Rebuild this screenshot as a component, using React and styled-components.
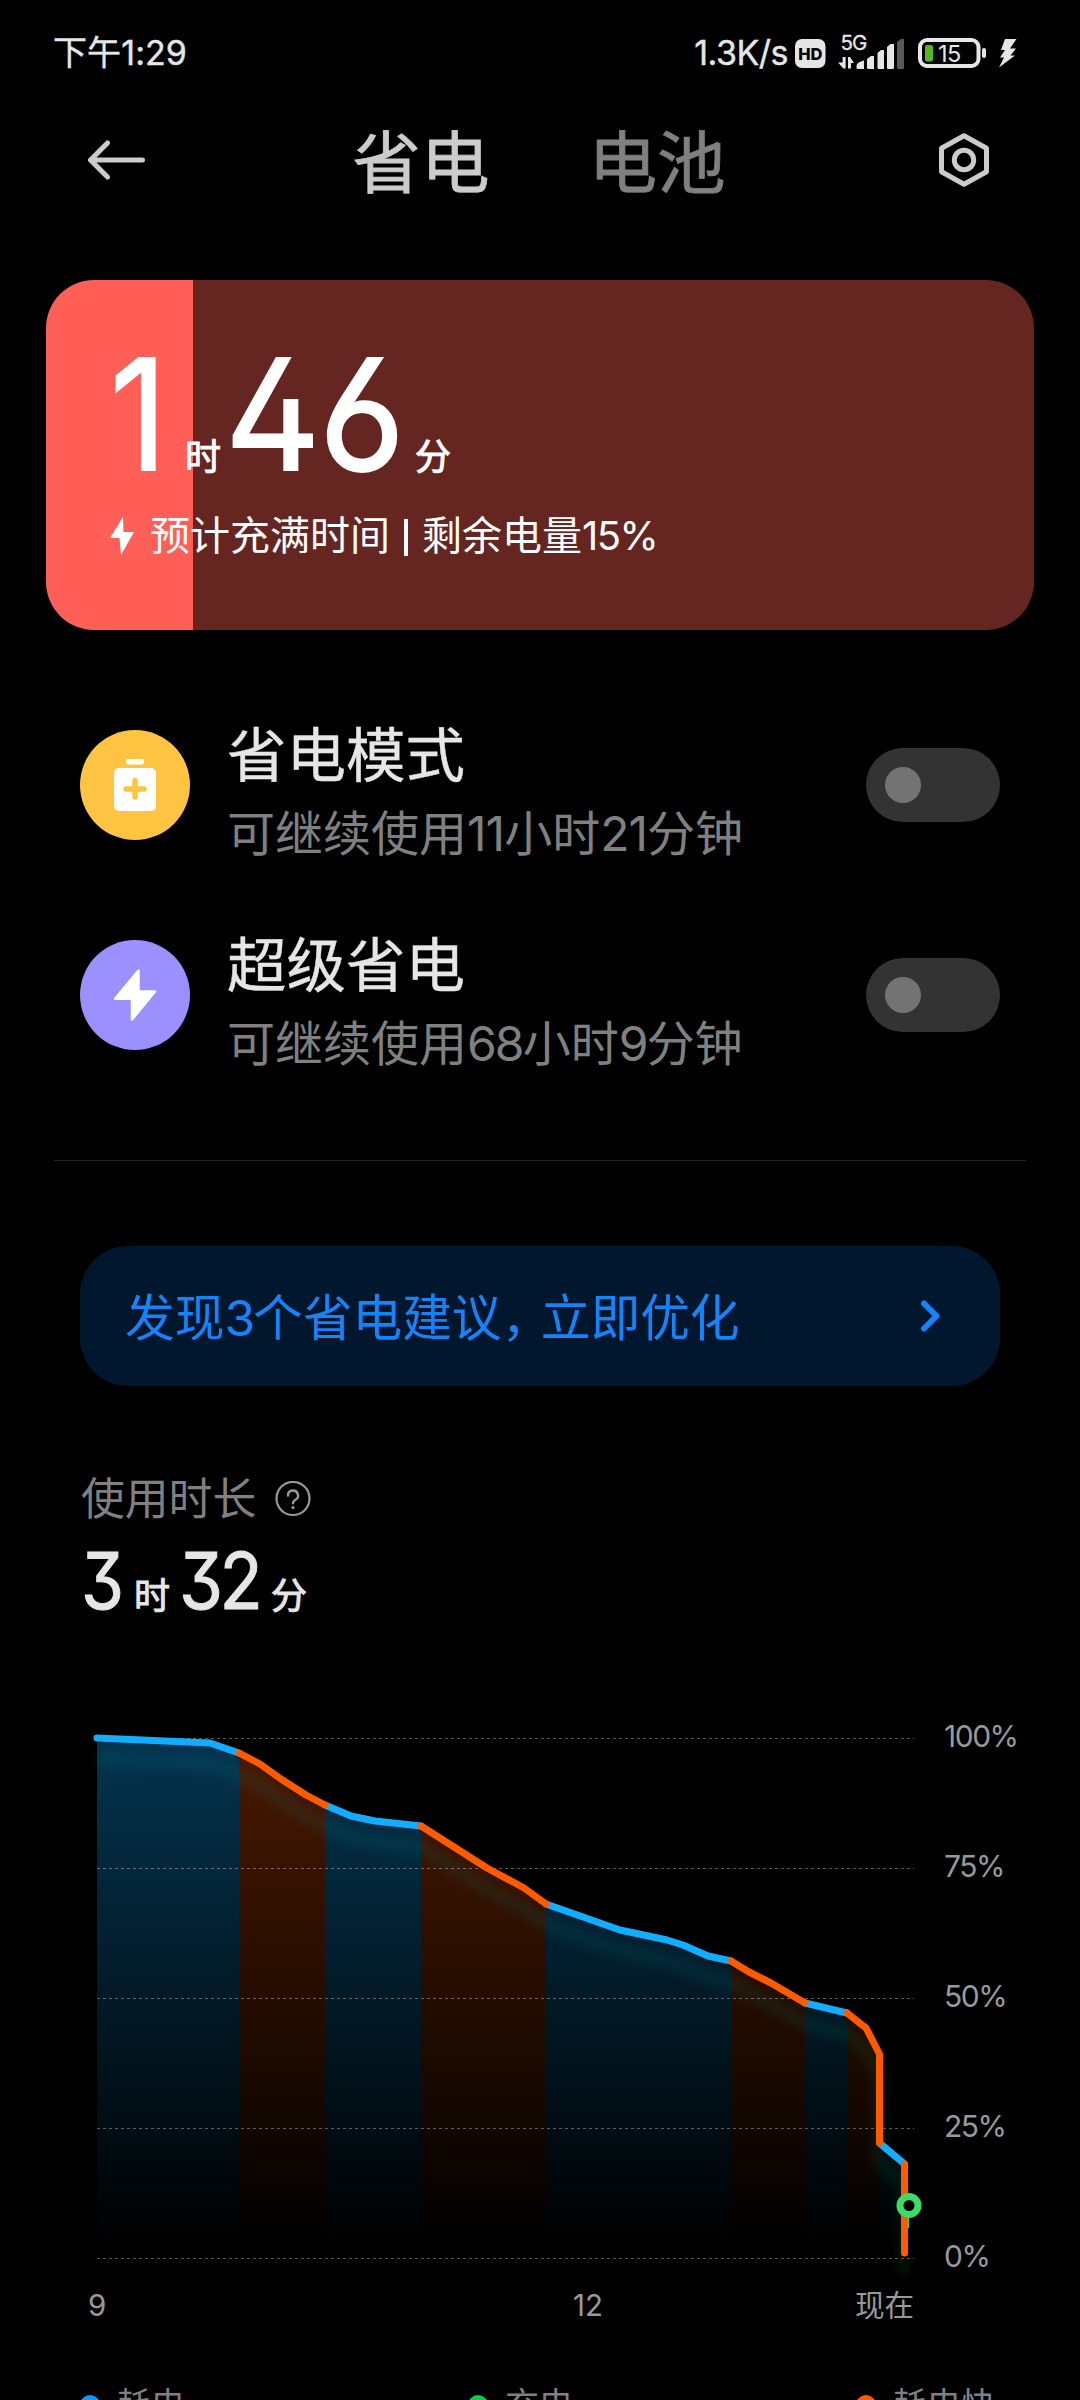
import React from "react";
import styled, { createGlobalStyle } from "styled-components";

const GlobalStyle = createGlobalStyle`
  * { box-sizing: border-box; }
  html, body { margin: 0; padding: 0; background: #000; }
  body { font-family: Inter, "Noto Sans CJK SC", sans-serif; }
`;

const Screen = styled.main`
  width: 1080px;
  height: 2400px;
  overflow: hidden;
  background: #000;
  color: #e6e6e6;
  display: flex;
  flex-direction: column;
`;

const StatusBar = styled.header`
  height: 105px;
  flex: none;
  padding: 0 62px 0 53px;
  display: flex;
  align-items: center;
  justify-content: space-between;
  font-size: 34px;
  line-height: 40px;
`;

const StatusText = styled.span`
  letter-spacing: ${(p) => p.$tracking || "0"};
  -webkit-text-stroke: 0.4px currentColor;
  white-space: nowrap;
`;

const StatusGroup = styled.div`
  display: flex;
  align-items: center;
`;

const StatusSvg = styled.svg`
  display: block;
  margin-left: 6px;
`;

const TitleBar = styled.nav`
  height: 115px;
  flex: none;
  padding: 0 88px;
  display: flex;
  align-items: center;
  justify-content: space-between;
`;

const NavIcon = styled.svg`
  display: block;
  margin-bottom: 5px;
`;

const Tabs = styled.div`
  display: flex;
  gap: 99px;
  margin: 2px 3px 0 0;
`;

const Tab = styled.span`
  font-size: 68.6px;
  line-height: 80px;
  color: ${(p) => (p.$active ? "#cccccc" : "#808080")};
  -webkit-text-stroke: 0.8px currentColor;
`;

const BatteryCard = styled.section`
  width: 988px;
  height: 350px;
  flex: none;
  margin: 60px 0 0 46px;
  padding: 59px 0 0 64px;
  border-radius: 48px;
  background: linear-gradient(to right, #ff5f57 ${(p) => p.$level}px, #652622 ${(p) => p.$level}px);
  color: #fff;
`;

const Duration = styled.div`
  display: flex;
  align-items: baseline;
  height: ${(p) => p.$height}px;
  line-height: ${(p) => p.$height}px;
`;

const BigNumber = styled.span`
  font-size: ${(p) => p.$size}px;
  font-weight: 400;
  font-feature-settings: "ss01", "cv03", "cv04", "cv09";
  -webkit-text-stroke: ${(p) => p.$stroke || 1}px currentColor;
  letter-spacing: ${(p) => p.$tracking || "0"};
  width: ${(p) => p.$width}px;
  white-space: nowrap;
  transform: scaleX(${(p) => p.$stretch || 0.91});
  transform-origin: left;
`;

const Unit = styled.span`
  font-size: 36px;
  -webkit-text-stroke: 1px currentColor;
  width: ${(p) => p.$width || 40}px;
`;

const CardNote = styled.div`
  display: flex;
  align-items: center;
  gap: 16px;
  margin-top: 23px;
  font-size: 40px;
  line-height: 48px;
  white-space: nowrap;
`;

const Bar = styled.span`
  display: inline-block;
  width: 4px;
  height: 37px;
  margin: 0 14px;
  background: #fff;
  vertical-align: -6px;
`;

const Num = styled.span`
  letter-spacing: ${(p) => p.$tracking || "-0.04em"};
`;

const Modes = styled.section`
  flex: none;
  margin-top: 80px;
  padding: 0 80px;
  display: flex;
  flex-direction: column;
  gap: 60px;
`;

const ModeRow = styled.div`
  height: 150px;
  display: flex;
  align-items: flex-start;
`;

const ModeIcon = styled.div`
  width: 110px;
  height: 110px;
  margin-top: 20px;
  border-radius: 50%;
  background: ${(p) => p.$color};
  display: flex;
  align-items: center;
  justify-content: center;
`;

const ModeText = styled.div`
  flex: 1;
  margin-left: 37px;
  padding-top: 5px;
`;

const ModeTitle = styled.div`
  font-size: 59.5px;
  line-height: 80px;
  -webkit-text-stroke: 0.4px currentColor;
`;

const ModeSub = styled.div`
  font-size: 48px;
  line-height: 77px;
  color: #808080;
  white-space: nowrap;
`;

const Switch = styled.div`
  width: 134px;
  height: 74px;
  margin-top: 38px;
  padding: 19px;
  border-radius: 37px;
  background: #333;
`;

const Knob = styled.div`
  width: 36px;
  height: 36px;
  border-radius: 50%;
  background: #737373;
`;

const Divider = styled.hr`
  flex: none;
  width: 972px;
  height: 1px;
  margin: 90px 0 0 54px;
  border: 0;
  background: #242424;
`;

const Tip = styled.section`
  flex: none;
  width: 920px;
  height: 140px;
  margin: 85px 0 0 80px;
  padding: 0 58px 0 45px;
  border-radius: 48px;
  background: #00172e;
  color: #1484fc;
  display: flex;
  align-items: center;
  justify-content: space-between;
  font-size: 49.7px;
  line-height: 60px;
`;

const TipText = styled.span`
  padding-top: 3px;
`;

const Usage = styled.section`
  flex: none;
  margin: 86px 0 0 81px;
`;

const UsageLabel = styled.div`
  display: flex;
  align-items: center;
  gap: 18px;
  color: #808080;
  font-size: 43.8px;
  line-height: 56px;
`;

const ChartArea = styled.section`
  flex: none;
  height: 560px;
  margin-top: 84px;
  padding-left: 80px;
  display: flex;
`;

const Plot = styled.svg`
  display: block;
  flex: none;
  width: 850px;
  height: 560px;
`;

const YAxis = styled.div`
  height: 562px;
  margin: -3px 0 0 14px;
  display: flex;
  flex-direction: column;
  justify-content: space-between;
  color: #999;
  font-size: 30px;
  line-height: 42px;
  letter-spacing: -0.05em;
`;

const XAxis = styled.div`
  flex: none;
  height: 42px;
  margin-top: 6px;
  padding-left: 88px;
  display: flex;
  color: #999;
  font-size: 29.5px;
  line-height: 42px;
`;

const XTick = styled.span`
  width: ${(p) => p.$width}px;
`;

const Legend = styled.div`
  flex: none;
  margin-top: 54px;
  padding-left: 80px;
  display: flex;
`;

const LegendItem = styled.div`
  width: ${(p) => p.$width}px;
  display: flex;
  align-items: center;
  gap: 17px;
  color: #808080;
  font-size: 34px;
  line-height: 50px;
`;

const Dot = styled.i`
  width: 20px;
  height: 20px;
  border-radius: 50%;
  background: ${(p) => p.$color};
`;

const BLUE = "#12adff";
const ORANGE = "#ff5a00";

const SEGMENTS = [
  { color: BLUE, points: [[97, 1738], [210, 1743], [239, 1753]] },
  { color: ORANGE, points: [[239, 1753], [260, 1764], [281, 1779], [306, 1795], [325, 1805]] },
  { color: BLUE, points: [[325, 1805], [351, 1816], [375, 1821], [421, 1826]] },
  { color: ORANGE, points: [[421, 1826], [487, 1868], [524, 1888], [546, 1904]] },
  { color: BLUE, points: [[546, 1904], [620, 1930], [667, 1940], [683, 1945], [708, 1956], [731, 1961]] },
  { color: ORANGE, points: [[731, 1961], [749, 1972], [771, 1983], [805, 2003]] },
  { color: BLUE, points: [[805, 2003], [847, 2013]] },
  { color: ORANGE, points: [[847, 2013], [866, 2028], [879.5, 2054], [879.5, 2143]] },
  { color: BLUE, points: [[879.5, 2143], [904.5, 2164]] },
  { color: ORANGE, points: [[904.5, 2164], [904.5, 2253]] },
];

const toPoints = (pts) => pts.map((p) => p.join(",")).join(" ");
const ALL_POINTS = SEGMENTS.flatMap((s) => s.points);
const GRID = [0, 1, 2, 3, 4].map((i) => 1738.5 + i * 130);

function BatteryChart() {
  const order = [BLUE, ORANGE];
  return (
    <Plot viewBox="80 1718 850 560" overflow="visible">
      <defs>
        <linearGradient id="fillBlue" gradientUnits="userSpaceOnUse" x1="0" x2="0" y1="1738" y2="2250">
          <stop offset="0" stopColor="#04344f" />
          <stop offset="1" stopColor="#000000" />
        </linearGradient>
        <linearGradient id="fillOrange" gradientUnits="userSpaceOnUse" x1="0" x2="0" y1="1738" y2="2250">
          <stop offset="0" stopColor="#4a1900" />
          <stop offset="1" stopColor="#000000" />
        </linearGradient>
        <linearGradient id="glow" gradientUnits="userSpaceOnUse" x1="97" x2="909" y1="0" y2="0">
          <stop offset="0" stopColor="#1690a0" />
          <stop offset="0.85" stopColor="#168a80" />
          <stop offset="1" stopColor="#1fa040" />
        </linearGradient>
        <filter id="soft" filterUnits="userSpaceOnUse" x="60" y="1700" width="900" height="640">
          <feGaussianBlur stdDeviation="6" />
        </filter>
        <clipPath id="plotClip">
          <rect x="80" y="1718" width="829" height="600" />
        </clipPath>
      </defs>
      {SEGMENTS.slice(0, -1).map(({ color, points }, i) => {
        const base = [[points[points.length - 1][0], 2258], [points[0][0], 2258]];
        return (
          <polygon
            key={i}
            points={toPoints([...points, ...base])}
            fill={color === BLUE ? "url(#fillBlue)" : "url(#fillOrange)"}
          />
        );
      })}
      <g clipPath="url(#plotClip)">
        <polyline
          points={toPoints(ALL_POINTS)}
          transform="translate(0 21)"
          fill="none"
          stroke="url(#glow)"
          strokeOpacity="0.14"
          strokeWidth="12"
          filter="url(#soft)"
        />
      </g>
      {GRID.map((y) => (
        <line key={y} x1="97" x2="914" y1={y} y2={y} stroke="#fff" strokeOpacity="0.35" strokeDasharray="3 3" />
      ))}
      {order.map((c) =>
        SEGMENTS.filter((s) => s.color === c).map((s, i) => (
          <polyline
            key={c + i}
            points={toPoints(s.points)}
            fill="none"
            stroke={s.color}
            strokeWidth="7"
            strokeLinecap="round"
            strokeLinejoin="round"
          />
        ))
      )}
      <path d="M908.500 2215V2228" stroke="#3ddc62" strokeWidth="1" />
      <circle cx="909" cy="2205.500" r="9" fill="#000" stroke="#3ddc62" strokeWidth="7" />
    </Plot>
  );
}

function StatusIcons() {
  return (
    <StatusSvg width="224" height="44" viewBox="794 30 224 44">
      <rect x="795" y="38" width="30.500" height="29" rx="7" fill="#e6e6e6" />
      <text x="810.300" y="58.500" fontSize="16.500" fontWeight="800" textAnchor="middle" fill="#000">HD</text>
      <text x="840.500" y="48.500" fontSize="20.500" fill="#e6e6e6" stroke="#e6e6e6" strokeWidth="0.300" letterSpacing="-1">5G</text>
      <path d="M842.600 56h3v11.500h-2.200L838 61.500h4.600zM848 67.500V56h2l4 6h-3v5.500z" fill="#e6e6e6" />
      <g fill="#e6e6e6">
        <path d="M856.500 65q0-4 7.500-5.500V68h-6q-1.500 0-1.500-1.500z" />
        <path d="M867 58l4-3h3v13h-5.500q-1.500 0-1.500-1.500z" />
        <path d="M877.500 52l3.500-3h3v19h-5q-1.500 0-1.500-1.500z" />
        <path d="M887 46l3.500-3h3.500v23.500q0 1.500-1.500 1.500h-4q-1.500 0-1.500-1.500z" />
      </g>
      <path d="M897 41l4-3h3v28.500q0 1.500-1.500 1.500h-4q-1.500 0-1.500-1.500z" fill="#595959" />
      <rect x="920" y="39" width="58.500" height="26" rx="7" fill="none" stroke="#e6e6e6" strokeWidth="4" />
      <rect x="925" y="44" width="8" height="16.500" rx="2" fill="#55b81c" />
      <text x="938" y="61" fontSize="23.500" fill="#e6e6e6" letterSpacing="-0.500">15</text>
      <rect x="982" y="47" width="4" height="10" rx="2" fill="#e6e6e6" />
      <path d="M1005 38h11.500l-6.500 9.500h6l-5.500 7h4.500L999 66.500l5-10h-4l5-7.500h-4z" fill="#e6e6e6" />
    </StatusSvg>
  );
}

function Mode({ color, icon, title, children }) {
  return (
    <ModeRow>
      <ModeIcon $color={color}>{icon}</ModeIcon>
      <ModeText>
        <ModeTitle>{title}</ModeTitle>
        <ModeSub>{children}</ModeSub>
      </ModeText>
      <Switch><Knob /></Switch>
    </ModeRow>
  );
}

const BatteryPlus = (
  <svg width="110" height="110" viewBox="0 0 110 110">
    <rect x="46" y="29" width="18" height="5.500" rx="2" fill="#fff" />
    <rect x="34" y="38" width="42" height="43" rx="5" fill="#fff" />
    <path d="M55 50.500v16.500M46 59h18" stroke="#ffc442" strokeWidth="5.500" strokeLinecap="round" />
  </svg>
);

const Bolt = (
  <svg width="110" height="110" viewBox="0 0 110 110">
    <path d="M58.500 30.500V51.500H75L52 79.500V58.800H35z" fill="#fff" stroke="#fff" strokeWidth="2.500" strokeLinejoin="round" />
  </svg>
);

export default function App() {
  return (
    <>
      <GlobalStyle />
      <Screen>
        <StatusBar>
          <StatusText $tracking="0.1px">下午1:29</StatusText>
          <StatusGroup>
            <StatusText $tracking="-0.5px">1.3K/s</StatusText>
            <StatusIcons />
          </StatusGroup>
        </StatusBar>

        <TitleBar>
          <NavIcon width="57" height="44" viewBox="88 138.500 57 44">
            <path d="M107.500 143.500L90.500 160.500L107.500 177.500M90.500 160.500H142.500" fill="none" stroke="#ccc" strokeWidth="5" strokeLinecap="round" strokeLinejoin="round" />
          </NavIcon>
          <Tabs>
            <Tab $active>省电</Tab>
            <Tab>电池</Tab>
          </Tabs>
          <NavIcon width="56" height="56" viewBox="936 132 56 56">
            <path d="M964 135.800L986.500 148.200V171.800L964 184.200L941.500 171.800V148.200Z" fill="none" stroke="#ccc" strokeWidth="5" strokeLinejoin="round" />
            <circle cx="964" cy="160" r="9.700" fill="none" stroke="#ccc" strokeWidth="5" />
          </NavIcon>
        </TitleBar>

        <BatteryCard $level={147}>
          <Duration $height={150}>
            <BigNumber $size={154} $width={75} $stroke={2}>1</BigNumber>
            <Unit $width={40}>时</Unit>
            <BigNumber $size={154} $width={190} $stroke={2} $stretch={0.96} $tracking="-0.01em">46</BigNumber>
            <Unit>分</Unit>
          </Duration>
          <CardNote>
            <svg width="24" height="40" viewBox="0 0 24 40">
              <path d="M13 1L0 22h9.500L11 39L24 16H13.500z" fill="#fff" />
            </svg>
            <span>
              预计充满时间<Bar />剩余电量<Num>15%</Num>
            </span>
          </CardNote>
        </BatteryCard>

        <Modes>
          <Mode color="#ffc442" icon={BatteryPlus} title="省电模式">
            可继续使用<Num $tracking="-0.02em">11</Num>小时<Num $tracking="-0.02em">21</Num>分钟
          </Mode>
          <Mode color="#9c8fff" icon={Bolt} title="超级省电">
            可继续使用<Num>68</Num>小时<Num>9</Num>分钟
          </Mode>
        </Modes>

        <Divider />

        <Tip>
          <TipText>
            发现<Num>3</Num>个省电建议<Num $tracking="-0.21em">，</Num>立即优化
          </TipText>
          <svg width="22" height="34" viewBox="0 0 22 34">
            <path d="M4 4.500L16.500 17L4 29.500" fill="none" stroke="#1484fc" strokeWidth="6" strokeLinecap="round" strokeLinejoin="round" />
          </svg>
        </Tip>

        <Usage>
          <UsageLabel>
            <span>使用时长</span>
            <svg width="38" height="38" viewBox="0 0 38 38">
              <circle cx="19" cy="17.500" r="16.500" fill="none" stroke="#999" strokeWidth="2.200" />
              <path d="M14 14.500a5 5 0 1 1 7.500 4.300q-2.500 1.500-2.500 3.500" fill="none" stroke="#999" strokeWidth="2.400" strokeLinecap="round" />
              <circle cx="19" cy="26.500" r="1.600" fill="#999" />
            </svg>
          </UsageLabel>
          <Duration $height={106}>
            <BigNumber $size={78} $width={53} $stretch={0.89} $tracking="-0.04em">3</BigNumber>
            <Unit $width={45}>时</Unit>
            <BigNumber $size={78} $width={92} $stretch={0.91} $tracking="-0.05em">32</BigNumber>
            <Unit>分</Unit>
          </Duration>
        </Usage>

        <ChartArea>
          <BatteryChart />
          <YAxis>
            <span>100%</span>
            <span>75%</span>
            <span>50%</span>
            <span>25%</span>
            <span>0%</span>
          </YAxis>
        </ChartArea>
        <XAxis>
          <XTick $width={485}>9</XTick>
          <XTick $width={282}>12</XTick>
          <XTick $width={62}>现在</XTick>
        </XAxis>

        <Legend>
          <LegendItem $width={388}><Dot $color="#0d99ff" />耗电</LegendItem>
          <LegendItem $width={388}><Dot $color="#0ecb4c" />充电</LegendItem>
          <LegendItem $width={224}><Dot $color="#ff5a00" />耗电快</LegendItem>
        </Legend>
      </Screen>
    </>
  );
}
